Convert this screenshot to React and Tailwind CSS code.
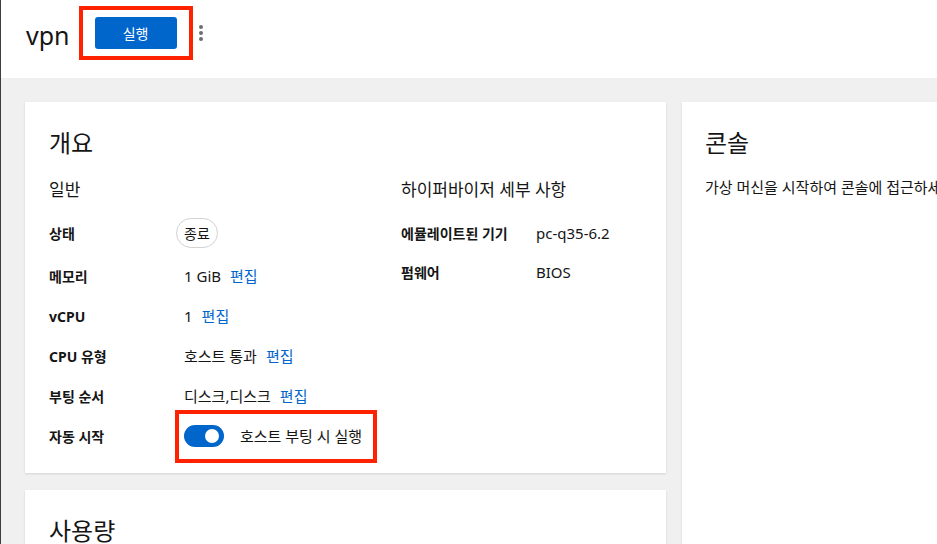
import React from "react";

const font = { fontFamily: '"Noto Sans", "Noto Sans CJK KR", sans-serif' };

function Row({ label, children, h = "h-[40px]" }) {
  return (
    <div className={`flex items-center ${h}`}>
      <div className="w-[135px] shrink-0 text-[14px] font-bold text-[#151515]">{label}</div>
      <div className="flex items-center text-[15px] text-[#151515]">{children}</div>
    </div>
  );
}

const Edit = () => <span className="ml-[9px] text-[#0066cc]">편집</span>;

export default function App() {
  return (
    <div className="w-[937px] h-[544px] overflow-hidden border-l border-[#3c3f42] bg-[#f0f0f0]" style={font}>
      <header className="flex h-[78px] items-center bg-white pl-[25px]">
        <h1 className="text-[25px] leading-[30px] text-[#151515] -mt-[9px]">vpn</h1>
        <div className="ml-[9px] -mt-[12px] border-[4px] border-[#ff2200] px-[12px] py-[7px]">
          <button className="flex h-[32px] w-[82px] items-center justify-center rounded-[3px] bg-[#0066cc] text-[14px] text-white">
            실행
          </button>
        </div>
        <div className="ml-[6px] -mt-[12px] flex flex-col gap-[2px]">
          <span className="block h-[4px] w-[4px] rounded-full bg-[#6a6e73]" />
          <span className="block h-[4px] w-[4px] rounded-full bg-[#6a6e73]" />
          <span className="block h-[4px] w-[4px] rounded-full bg-[#6a6e73]" />
        </div>
      </header>
      <main className="flex gap-[16px] pl-[24px] pt-[24px]">
        <div className="flex w-[641px] shrink-0 flex-col gap-[17px]">
          <section className="h-[371px] bg-white px-[24px] pt-[26px] shadow-[0_1px_2px_rgba(3,3,3,0.12)]">
            <h2 className="text-[24px] leading-[30px] text-[#151515]">개요</h2>
            <div className="mt-[20px] flex">
              <div className="w-[352px]">
                <h3 className="text-[17px] leading-[24px] text-[#151515]">일반</h3>
                <div className="mt-[8px]">
                  <Row label="상태" h="h-[46px]">
                    <span className="-ml-[8px] flex h-[30px] items-center rounded-full border border-[#d2d2d2] px-[7px] text-[14px]">종료</span>
                  </Row>
                  <Row label="메모리">1 GiB<Edit /></Row>
                  <Row label="vCPU">1<Edit /></Row>
                  <Row label="CPU 유형">호스트 통과<Edit /></Row>
                  <Row label="부팅 순서">디스크,디스크<Edit /></Row>
                  <Row label="자동 시작">
                    <div className="-ml-[9px] flex h-[53px] w-[202px] items-center border-[4px] border-[#ff2200] pl-[5px]">
                      <span className="relative h-[22px] w-[40px] shrink-0 rounded-full bg-[#0066cc]">
                        <span className="absolute right-[5px] top-[4px] h-[14px] w-[14px] rounded-full bg-white" />
                      </span>
                      <span className="ml-[16px] whitespace-nowrap">호스트 부팅 시 실행</span>
                    </div>
                  </Row>
                </div>
              </div>
              <div className="flex-1">
                <h3 className="text-[17px] leading-[24px] text-[#151515]">하이퍼바이저 세부 사항</h3>
                <div className="mt-[8px]">
                  <Row label="에뮬레이트된 기기" h="h-[46px]">pc-q35-6.2</Row>
                  <Row label="펌웨어" h="h-[32px]">BIOS</Row>
                </div>
              </div>
            </div>
          </section>
          <section className="h-[200px] bg-white px-[24px] pt-[26px] shadow-[0_1px_2px_rgba(3,3,3,0.12)]">
            <h2 className="text-[24px] leading-[30px] text-[#151515]">사용량</h2>
          </section>
        </div>
        <section className="h-[500px] flex-1 overflow-hidden bg-white pl-[23px] pt-[26px] shadow-[0_1px_2px_rgba(3,3,3,0.12)]">
          <h2 className="text-[24px] leading-[30px] text-[#151515]">콘솔</h2>
          <p className="mt-[19px] whitespace-nowrap text-[15px] leading-[21px] text-[#151515]">
            가상 머신을 시작하여 콘솔에 접근하세요.
          </p>
        </section>
      </main>
    </div>
  );
}
